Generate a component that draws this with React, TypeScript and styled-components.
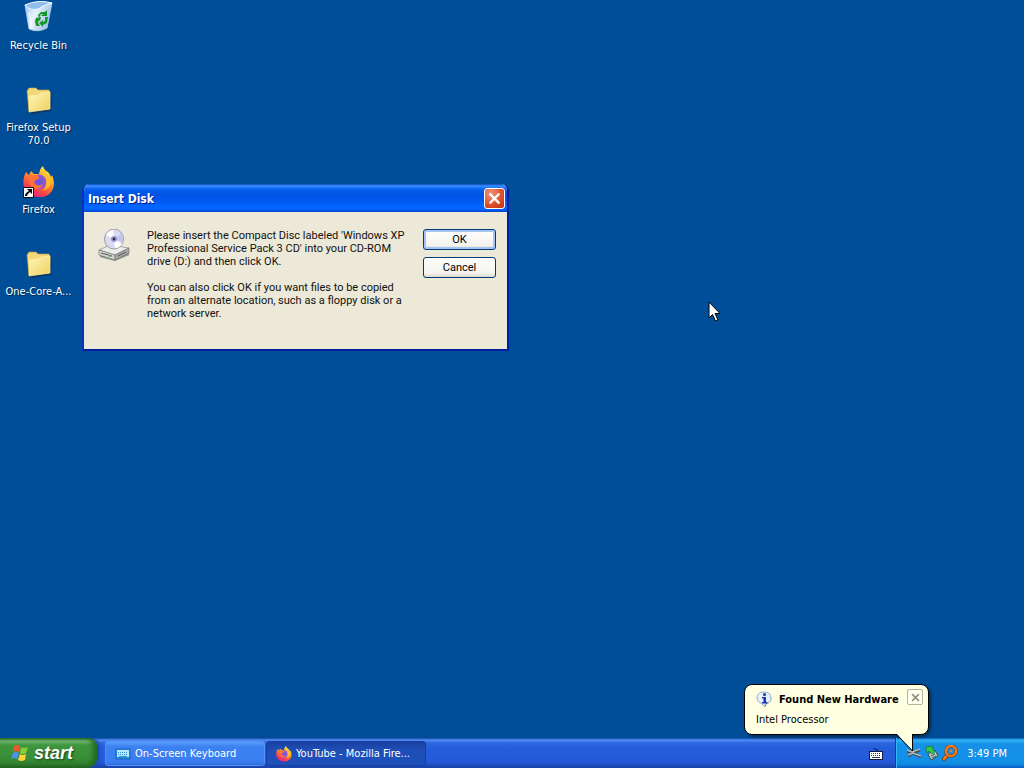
import React from "react";
import styled, { createGlobalStyle, css } from "styled-components";

const tahoma = `"DejaVu Sans Condensed", "Noto Sans", sans-serif`;
const sans = `"Liberation Sans", sans-serif`;
const dialogFont = `Roboto, "Liberation Sans", sans-serif`;

const GlobalStyle = createGlobalStyle`
  * { box-sizing: border-box; }
  body { margin: 0; background: #004e98; font: 11px/13px ${tahoma}; overflow: hidden; }
  button { font: inherit; color: inherit; padding: 0; cursor: default; }
  svg { display: block; flex: none; }
`;

const Screen = styled.div`
  min-height: 100vh;
  display: flex;
  flex-direction: column;
  position: relative;
`;

const Desktop = styled.main`
  flex: 1;
  position: relative;
`;

const IconColumn = styled.nav`
  width: 77px;
  display: grid;
  grid-auto-rows: 82px;
`;

const Shortcut = styled.button`
  border: 0;
  background: none;
  color: #fff;
  display: flex;
  flex-direction: column;
  align-items: center;
  justify-content: flex-start;
  gap: 5px;
  padding: 2px 2px 0;
  min-width: 0;
`;

const ShortcutLabel = styled.span<{ $clip?: boolean }>`
  width: 100%;
  text-align: center;
  text-shadow: 1px 1px 1px #00254d;
  ${(p) => p.$clip && css`white-space: nowrap;`}
`;

const Dialog = styled.section`
  position: absolute;
  left: 82px;
  top: 184px;
  width: 427px;
  border: 2px solid #0831c4;
  border-top: 0;
  border-right-color: #001ea0;
  border-bottom-color: #001ea0;
  border-radius: 7px 7px 0 0;
  background: #ece9d8;
  font-family: ${dialogFont};
  overflow: hidden;
`;

const TitleBar = styled.header`
  height: 28px;
  padding: 1px 2px 0 4px;
  display: flex;
  align-items: center;
  justify-content: space-between;
  background: linear-gradient(#0a4bc0 0, #3a91ff 2px, #0863ef 5px, #0054e3 10px, #0058ee 17px, #0066ff 22px, #0066ff 25px, #0044cc 28px);
  color: #fff;
`;

const Title = styled.h1`
  margin: 0;
  font: bold 12px/16px ${tahoma};
  text-shadow: 1px 1px #0a1883;
`;

const CloseButton = styled.button`
  width: 21px;
  height: 21px;
  border: 1px solid #fff;
  border-radius: 3px;
  display: grid;
  place-items: center;
  background: radial-gradient(circle at 30% 25%, #f0957b, #e0512c 55%, #bd2f0c);
`;

const DialogBody = styled.div`
  display: grid;
  grid-template-columns: 32px 1fr 73px;
  min-height: 136px;
  padding: 17px 11px 16px 14px;
  align-items: start;
`;

const Message = styled.div`
  padding-left: 17px;
  color: #111;
  white-space: nowrap;
  p { margin: 0 0 13px; }
`;

const ButtonStack = styled.div`
  display: flex;
  flex-direction: column;
  gap: 7px;
`;

const PushButton = styled.button<{ $focused?: boolean }>`
  height: 21px;
  border: 1px solid #003c74;
  border-radius: 3px;
  background: linear-gradient(#fff, #f4f3ee 80%, #dcd8cd);
  ${(p) => p.$focused && css`box-shadow: inset 0 0 0 2px #a5c3f3;`}
`;

const Balloon = styled.aside`
  position: absolute;
  right: 95px;
  bottom: 33px;
  width: 185px;
  height: 51px;
  padding: 5px 5px 5px 11px;
  border: 1px solid #000;
  border-radius: 8px;
  background: #ffffe1;
  box-shadow: 2px 2px 3px rgba(0, 0, 0, 0.4);
  z-index: 2;
`;

const BalloonHead = styled.div`
  display: flex;
  align-items: center;
  height: 18px;
  gap: 6px;
  strong { flex: 1; white-space: nowrap; }
`;

const BalloonText = styled.p`
  margin: 5px 0 0;
`;

const BalloonClose = styled.button`
  width: 16px;
  height: 16px;
  margin-top: -4px;
  border: 1px solid #b5b29e;
  border-radius: 2px;
  background: #fffff0;
  display: grid;
  place-items: center;
`;

const BalloonTail = styled.svg`
  position: absolute;
  right: 13px;
  top: 49px;
`;

const Taskbar = styled.footer`
  height: 30px;
  display: flex;
  color: #fff;
  background: linear-gradient(#1941a5 0, #4c8ff5 2px, #2e66df 5px, #245edb 10px, #2459d8 24px, #1941a5 30px);
`;

const StartButton = styled.button`
  width: 97px;
  border: 0;
  border-radius: 0 8px 10px 0;
  padding: 0 0 1px 10px;
  margin-right: 8px;
  display: flex;
  align-items: center;
  gap: 4px;
  background: linear-gradient(#2b6b2c 0, #74b873 3px, #40963e 7px, #388e37 20px, #2f7f2e 26px, #205f20 30px);
  box-shadow: inset -4px 0 5px #236823, 2px 0 3px #1b48ad;
  font: italic bold 18px/22px ${sans};
  text-shadow: 1px 1px 2px #173f16;
`;

const TaskList = styled.div`
  flex: 1;
  display: flex;
  gap: 1px;
  padding: 3px 0 2px;
`;

const TaskButton = styled.button<{ $active?: boolean }>`
  width: 160px;
  border: 1px solid ${(p) => (p.$active ? "#173f9e" : "#4f91f8")};
  border-radius: 3px;
  padding: 0 8px 0 9px;
  display: flex;
  align-items: center;
  gap: 4px;
  white-space: nowrap;
  background: ${(p) => (p.$active ? "linear-gradient(#193f9f, #1e4db5 30%, #1f50bb)" : "linear-gradient(#5d9dfc, #3c81f0 20%, #3a7df0 85%, #2f6bda)")};
`;

const LanguageBar = styled.div`
  padding: 9px 12px 0 0;
`;

const Tray = styled.div`
  width: 129px;
  display: flex;
  align-items: center;
  gap: 2px;
  padding: 0 17px 0 10px;
  border-left: 1px solid #0e3d9b;
  box-shadow: inset 1px 0 #38b5f5;
  background: linear-gradient(#0c59b9 0, #30b4f3 2px, #1690e8 6px, #1290e8 22px, #108be0 26px, #095bc9 30px);
  time { margin-left: auto; white-space: nowrap; }
`;

const Cursor = styled.svg`
  position: absolute;
  left: 708px;
  top: 301px;
`;

function RecycleBin() {
  return (
    <svg width="32" height="32" viewBox="0 0 32 32" overflow="visible" aria-hidden="true">
      <defs>
        <linearGradient id="bin" x1="0" y1="0" x2="1" y2=".4">
          <stop offset="0" stopColor="#8fc0f2" />
          <stop offset=".45" stopColor="#e8f3fd" />
          <stop offset="1" stopColor="#9dbfe6" />
        </linearGradient>
      </defs>
      <path d="M2 3 L6 27 Q15 31 24 26 L29 1 Q15 -1 2 3Z" fill="url(#bin)" stroke="#b8d6f3" strokeWidth=".8" />
      <path d="M2 3 Q7 9 15 7 Q23 2 29 1 Q15 -3 2 3Z" fill="#8fbdec" stroke="#f4faff" />
      <path d="M6 10 L9 26" stroke="#fff" strokeWidth="2" opacity=".6" />
      <g fill="#18952b">
        <path d="M15 13 L18 10 L22 10 L24 8 V14 H18 L20 12 H18 L16 16Z" />
        <path d="M22 15 L25 15 L24 21 L20 23 V25 L16 21 L20 18 V20 L22 19Z" />
        <path d="M13 16 L18 15 L17 19 L16 18 L15 21 L17 24 H13 L12 19Z" />
      </g>
    </svg>
  );
}

function Folder() {
  return (
    <svg width="32" height="32" viewBox="0 0 32 32" aria-hidden="true">
      <defs>
        <linearGradient id="folder" x1="0" y1="0" x2="1" y2="1">
          <stop offset="0" stopColor="#fff7b7" />
          <stop offset="1" stopColor="#f0cf5f" />
        </linearGradient>
      </defs>
      <path d="M5 7 L8 5 L15 6 L18 8 L28 8 L29 10 L28 27 L9 30 L5 28Z" fill="#142f47" opacity=".7" />
      <path d="M4 7 L6 4 L13 4 L15 6 L26 6 L27 9 L26 25 L6 27Z" fill="#f2d878" stroke="#c59f45" strokeWidth=".6" />
      <path d="M6 12 L15 11 L18 9 L27 8 L27 25 L6 28Z" fill="url(#folder)" stroke="#fff1a0" strokeWidth=".7" />
    </svg>
  );
}

function FirefoxLogo({ size, shortcut }: { size: number; shortcut?: boolean }) {
  const id = `fox${size}`;
  return (
    <svg width={size} height={size} viewBox="0 0 32 32" aria-hidden="true">
      <defs>
        <linearGradient id={id} x1=".8" y1="0" x2=".25" y2="1">
          <stop offset="0" stopColor="#fff44f" />
          <stop offset=".35" stopColor="#ffad1f" />
          <stop offset=".65" stopColor="#ff563c" />
          <stop offset="1" stopColor="#e31587" />
        </linearGradient>
        <radialGradient id={`${id}p`}>
          <stop offset="0" stopColor="#6453d9" />
          <stop offset="1" stopColor="#9859d2" />
        </radialGradient>
      </defs>
      <path d="M3 6 L6 9 L8 5 L11 8 L16 8 Q17 2 20 0 Q21 4 25 6 Q27 8 28 11 L29 9 Q33 18 29 25 Q24 32 16 31 Q5 31 1 21 Q-1 12 3 6Z" fill={`url(#${id})`} />
      <circle cx="16" cy="16" r="7.5" fill={`url(#${id}p)`} />
      <path d="M6 9 L14 9 L17 12 L13 14 Q10 15 12 18 Q15 21 20 18 Q17 25 10 22 Q5 19 6 9Z" fill="#ff7139" />
      <path d="M18 7 Q25 11 23 20 Q22 24 19 25 Q28 23 28 14 Q25 8 20 6Z" fill="#ffbd32" />
      {shortcut && (
        <>
          <path d="M.5 21.5 H10.500 V31.500 H.5Z" fill="#fff" stroke="#111" />
          <path d="M4 23 H9 V28 L7 26 Q4 28 4 30 H2 Q2 27 6 25Z" fill="#000" />
        </>
      )}
    </svg>
  );
}

function DiscDrive() {
  return (
    <svg width="32" height="32" viewBox="0 0 32 32" aria-hidden="true">
      <path d="M2 22 L12 17 L31 20 V26 L17 32 L2 28Z" fill="#8b8b89" />
      <path d="M1 21 L12 16 L31 19 L17 26Z" fill="#ececea" stroke="#888" strokeWidth=".7" />
      <path d="M1 21 L17 26 V31 L1 26Z" fill="#d6d6d4" stroke="#777" strokeWidth=".7" />
      <path d="M17 26 L31 19 V24 L17 31Z" fill="#a9a9a6" stroke="#777" strokeWidth=".7" />
      <path d="M3 24 L14 27 M20 27 L28 23" stroke="#555" />
      <ellipse cx="16" cy="10" rx="9.500" ry="10" fill="#dadbf1" stroke="#8a8aa0" strokeWidth=".8" />
      <path d="M16 10 L8 6 Q11 1 15 1Z M16 10 L24 15 Q21 19 17 19Z" fill="#fff" />
      <path d="M16 10 L23 5 Q26 9 24 13Z" fill="#c4c4ee" />
      <circle cx="16" cy="10" r="3" fill="#9195c7" />
      <circle cx="16" cy="10" r="1.300" fill="#27273b" />
      <circle cx="12" cy="27" r="1" fill="#43b756" />
    </svg>
  );
}

function InfoIcon() {
  return (
    <svg width="17" height="17" viewBox="0 0 17 17" aria-hidden="true">
      <path d="M8 1 C3 1 1 4 1 7 Q1 11 6 13 L9 16 V13 Q15 12 15 7 Q15 1 8 1Z" fill="#e9f0fb" stroke="#9caecb" />
      <path d="M14 4 Q18 11 9 14 V16 L11 13 Q18 10 14 4" fill="#7488a5" />
      <circle cx="8.500" cy="3.500" r="1.500" fill="#1539a8" />
      <path d="M6 6 H10 V11 H11.500 V12.500 H6 V11 H7.500 V7.500 H6Z" fill="#1539a8" />
    </svg>
  );
}

function WindowsFlag() {
  return (
    <svg width="20" height="20" viewBox="0 0 20 20" aria-hidden="true">
      <path d="M4 3 Q7 1 10 3 L9 9 Q6 7 3 9Z" fill="#f05a28" />
      <path d="M11 4 Q14 6 18 4 L16 10 Q13 12 10 10Z" fill="#85cf38" />
      <path d="M3 10 Q6 8 9 10 L7 16 Q4 14 1 16Z" fill="#4b91ef" />
      <path d="M10 11 Q13 13 16 11 L15 17 Q11 19 8 17Z" fill="#ffd23b" />
    </svg>
  );
}

function KeyboardIcon({ small }: { small?: boolean }) {
  return small ? (
    <svg width="14" height="14" viewBox="0 0 14 14" aria-hidden="true">
      <path d="M4 2 Q5 0 6 2 T9 2 M8 4 V2" fill="none" stroke="#132761" />
      <path d="M0 4 H14 V13 H0Z" fill="#111a43" />
      <path d="M1 5 H13 V12 H1Z" fill="#fff" />
      <path d="M2 6.500 H12 M2 8.500 H12" stroke="#303861" strokeDasharray="1 1" />
      <path d="M3 10.500 H11" stroke="#303861" />
    </svg>
  ) : (
    <svg width="16" height="16" viewBox="0 0 16 16" aria-hidden="true">
      <path d="M1 3 H15 V13 H1Z" fill="#268ddd" stroke="#1769be" />
      <path d="M2 4 H14 V11 H2Z" fill="#b9e9ff" />
      <path d="M3 6.500 H13 M3 8.500 H13" stroke="#328fd0" strokeDasharray="1 1" />
      <path d="M4 10.500 H12" stroke="#328fd0" />
    </svg>
  );
}

function HardwareIcon() {
  return (
    <svg width="16" height="16" viewBox="0 0 16 16" aria-hidden="true">
      <path d="M1 6 L6 8 L14 5 M2 11 L7 8 L15 12" fill="none" stroke="#414e5b" strokeWidth="3" />
      <path d="M1 5 L6 7 L14 4 M2 10 L7 8 L15 11" fill="none" stroke="#b3b7b7" strokeWidth="1.500" />
    </svg>
  );
}

function SafelyRemoveIcon() {
  return (
    <svg width="16" height="16" viewBox="0 0 16 16" aria-hidden="true">
      <path d="M4 9 L11 5 L14 11 L7 15Z" fill="#b8c5c1" stroke="#3a5352" />
      <path d="M7 11 L11 9 M8 13 L12 11" stroke="#405f59" />
      <path d="M2 2 L9 1 L8 4 L11 7 L8 9 L5 6 L3 8Z" fill="#35ca43" stroke="#16742d" strokeWidth=".7" />
    </svg>
  );
}

function SearchIcon() {
  return (
    <svg width="16" height="16" viewBox="0 0 16 16" aria-hidden="true">
      <path d="M6 9 L2 14" stroke="#783b16" strokeWidth="4" strokeLinecap="round" />
      <path d="M6 9 L2 14" stroke="#ff7d13" strokeWidth="2.500" strokeLinecap="round" />
      <circle cx="9" cy="6" r="5" fill="#218ddd" stroke="#8a431b" strokeWidth="3.500" />
      <circle cx="9" cy="6" r="5" fill="none" stroke="#ff7d13" strokeWidth="2.200" />
      <circle cx="9" cy="6" r="1" fill="#eb913e" />
    </svg>
  );
}

function CloseCross({ color, size }: { color: string; size: number }) {
  return (
    <svg width={size} height={size} viewBox="0 0 12 12" aria-hidden="true">
      <path d="M1.500 1.500 L10.500 10.500 M10.500 1.500 L1.500 10.500" stroke={color} strokeWidth="2" />
    </svg>
  );
}

export default function App() {
  return (
    <Screen>
      <GlobalStyle />
      <Desktop>
        <IconColumn aria-label="Desktop shortcuts">
          <Shortcut><RecycleBin /><ShortcutLabel>Recycle Bin</ShortcutLabel></Shortcut>
          <Shortcut><Folder /><ShortcutLabel>Firefox Setup 70.0</ShortcutLabel></Shortcut>
          <Shortcut><FirefoxLogo size={32} shortcut /><ShortcutLabel>Firefox</ShortcutLabel></Shortcut>
          <Shortcut><Folder /><ShortcutLabel $clip>One-Core-A...</ShortcutLabel></Shortcut>
        </IconColumn>
        <Dialog role="dialog" aria-labelledby="dialog-title">
          <TitleBar>
            <Title id="dialog-title">Insert Disk</Title>
            <CloseButton aria-label="Close"><CloseCross color="#fff" size={13} /></CloseButton>
          </TitleBar>
          <DialogBody>
            <DiscDrive />
            <Message>
              <p>
                Please insert the Compact Disc labeled 'Windows XP<br />
                Professional Service Pack 3 CD' into your CD-ROM<br />
                drive (D:) and then click OK.
              </p>
              <p>
                You can also click OK if you want files to be copied<br />
                from an alternate location, such as a floppy disk or a<br />
                network server.
              </p>
            </Message>
            <ButtonStack>
              <PushButton $focused>OK</PushButton>
              <PushButton>Cancel</PushButton>
            </ButtonStack>
          </DialogBody>
        </Dialog>
      </Desktop>
      <Taskbar>
        <StartButton><WindowsFlag />start</StartButton>
        <TaskList>
          <TaskButton><KeyboardIcon />On-Screen Keyboard</TaskButton>
          <TaskButton $active><FirefoxLogo size={16} />YouTube - Mozilla Fire...</TaskButton>
        </TaskList>
        <LanguageBar><KeyboardIcon small /></LanguageBar>
        <Tray>
          <HardwareIcon />
          <SafelyRemoveIcon />
          <SearchIcon />
          <time>3:49 PM</time>
        </Tray>
      </Taskbar>
      <Balloon role="status">
        <BalloonHead>
          <InfoIcon />
          <strong>Found New Hardware</strong>
          <BalloonClose aria-label="Dismiss"><CloseCross color="#8f8c7c" size={9} /></BalloonClose>
        </BalloonHead>
        <BalloonText>Intel Processor</BalloonText>
        <BalloonTail width="20" height="20" viewBox="0 0 20 20" aria-hidden="true">
          <path d="M2 0 L18 17 V0Z" fill="#ffffe1" />
          <path d="M1 0 L17.500 17 V0" fill="none" stroke="#000" />
        </BalloonTail>
      </Balloon>
      <Cursor width="13" height="21" viewBox="0 0 13 21" aria-hidden="true">
        <path d="M1 1 V17 L4.500 13.500 L7.500 20 L10 19 L7 12.500 H12Z" fill="#fff" stroke="#000" />
      </Cursor>
    </Screen>
  );
}
